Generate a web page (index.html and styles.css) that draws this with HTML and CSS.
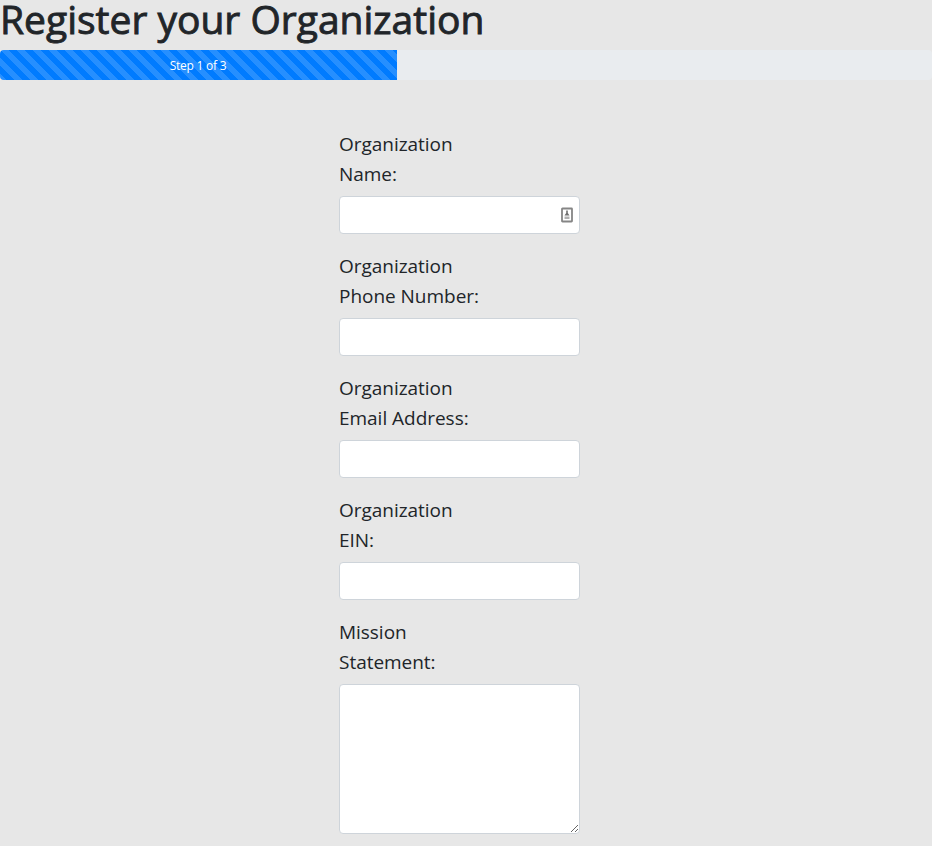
FILE: index.html
```html
<!DOCTYPE html>
<html lang="en">
<head>
<meta charset="utf-8">
<title>Register your Organization</title>
<link rel="stylesheet" href="styles.css">
</head>
<body>
<h1>Register your Organization</h1>
<div class="progress"><div class="progress-bar">Step 1 of 3</div></div>
<form class="form">
  <div class="group"><label for="name">Organization<br>Name:</label>
    <div class="field"><input id="name" type="text">
    <svg class="autofill" viewBox="0 0 12 16"><rect x="1" y="1.5" width="10" height="13" rx=".5" fill="#fff" stroke="#858585" stroke-width="1.8"/><path d="M5.2 3.5h1.6V6L8.5 8.5h-5L5.2 6Z" fill="#707070"/><path d="M3.5 9.5h5v2.5h-5z" fill="#b0b0b0"/></svg></div></div>
  <div class="group"><label for="phone">Organization<br>Phone Number:</label><input id="phone" type="text"></div>
  <div class="group"><label for="email">Organization<br>Email Address:</label><input id="email" type="text"></div>
  <div class="group"><label for="ein">Organization<br>EIN:</label><input id="ein" type="text"></div>
  <div class="group"><label for="mission">Mission<br>Statement:</label><textarea id="mission"></textarea></div>
</form>
</body>
</html>
```
FILE: styles.css
```css
* { box-sizing: border-box; }
body { margin: 0; min-height: 100vh; background: #e7e7e7; color: #212529; font-family: "Open Sans", "Noto Sans", sans-serif; }
h1 { margin: 0; height: 50px; font-size: 39px; line-height: 38px; font-weight: 400; white-space: nowrap; -webkit-text-stroke: .9px #212529; }
.progress { display: flex; height: 30px; background: #e9ecef; border-radius: 4px; overflow: hidden; font-size: 12px; }
.progress-bar { display: flex; align-items: center; justify-content: center; width: 397px; padding-right: 1px; color: #fff; background: #007bff linear-gradient(45deg, rgba(255,255,255,.15) 25%, transparent 25%, transparent 50%, rgba(255,255,255,.15) 50%, rgba(255,255,255,.15) 75%, transparent 75%, transparent) 0 0 / 16px 16px; letter-spacing: -.25px; }
.form { width: 241px; margin: 49px 0 0 339px; }
.group { margin-bottom: 17px; }
.group:last-child { margin-bottom: 0; }
label { display: block; margin-bottom: 7px; font-size: 19px; line-height: 30px; letter-spacing: -.03px; }
input, textarea { display: block; width: 100%; height: 38px; margin: 0; border: 1px solid #ced4da; border-radius: 4px; background: #fff; padding: 6px 12px; font: inherit; }
textarea { height: 150px; resize: vertical; }
.field { position: relative; }
.autofill { position: absolute; right: 7px; top: 11px; width: 12px; height: 16px; }
```
